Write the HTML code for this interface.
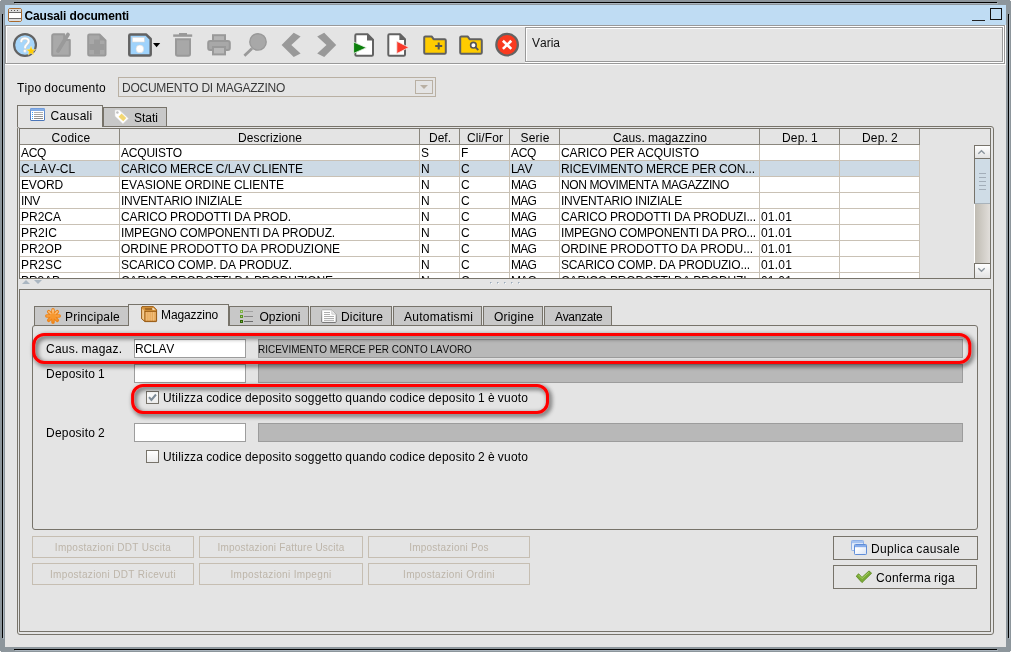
<!DOCTYPE html>
<html lang="it"><head><meta charset="utf-8"><title>Causali documenti</title>
<style>
html,body{margin:0;padding:0;}
body{font-kerning:none;width:1011px;height:652px;overflow:hidden;background:#e4e4e4;font-family:"Liberation Sans",sans-serif;font-size:12px;color:#000;}
#win{will-change:transform;position:relative;width:1011px;height:652px;overflow:hidden;background:#e4e4e4;}
.a{position:absolute;box-sizing:border-box;}
.t{position:absolute;white-space:nowrap;line-height:14px;font-size:12px;}
.s{position:absolute;white-space:nowrap;line-height:13px;font-size:11px;}
svg{position:absolute;overflow:visible;}
.tab{position:absolute;box-sizing:border-box;border:1px solid #77736a;background:#c8c8c8;}
.tabsel{position:absolute;box-sizing:border-box;border:1px solid #77736a;border-bottom:none;background:#e4e4e4;}
.dbtn{position:absolute;box-sizing:border-box;border:1px solid #c6beb2;color:#bdb5a9;font-size:10px;line-height:21px;text-align:center;white-space:nowrap;}
.btn{position:absolute;box-sizing:border-box;border:1px solid #77736a;}
.inp{position:absolute;box-sizing:border-box;border:1px solid #9d9d9d;background:#fff;}
.gfl{position:absolute;box-sizing:border-box;border:1px solid #9c9c9c;background:#b8b8b8;}
.row{position:absolute;left:20px;width:900px;height:15px;background:#fff;border-bottom:1px solid #c9c1b5;}
.cell{position:absolute;top:0;height:15px;line-height:17px;white-space:nowrap;overflow:hidden;border-right:1px solid #c9c1b5;box-sizing:border-box;padding-left:1px;}

</style></head>
<body>
<div id="win">
<div class="a " style="left:0px;top:0px;width:1011px;height:652px;background:#8d969c;"></div>
<div class="a " style="left:5px;top:5px;width:1001px;height:642px;background:#e4e4e4;"></div>
<div class="a " style="left:14px;top:2px;width:983px;height:1px;background:#000;"></div>
<div class="a " style="left:15px;top:3px;width:983px;height:1px;background:#aab4bd;"></div>
<div class="a " style="left:14px;top:649px;width:983px;height:1px;background:#000;"></div>
<div class="a " style="left:15px;top:650px;width:983px;height:1px;background:#aab4bd;"></div>
<div class="a " style="left:2px;top:14px;width:1px;height:624px;background:#000;"></div>
<div class="a " style="left:3px;top:15px;width:1px;height:624px;background:#aab4bd;"></div>
<div class="a " style="left:1008px;top:14px;width:1px;height:624px;background:#000;"></div>
<div class="a " style="left:1009px;top:15px;width:1px;height:624px;background:#aab4bd;"></div>
<div class="a " style="left:0px;top:0px;width:1px;height:1px;background:#f2f2f2;"></div>
<div class="a " style="left:1010px;top:0px;width:1px;height:1px;background:#f2f2f2;"></div>
<div class="a " style="left:0px;top:651px;width:1px;height:1px;background:#f2f2f2;"></div>
<div class="a " style="left:1010px;top:651px;width:1px;height:1px;background:#f2f2f2;"></div>
<div class="a " style="left:5px;top:5px;width:1001px;height:20px;background:#bfdcf3;"></div>
<svg style="left:8px;top:8px" width="14" height="14" viewBox="0 0 14 14">
<rect x="0.5" y="0.5" width="13" height="13" rx="1.6" fill="#fff" stroke="#a8682c"/>
<rect x="1" y="1" width="12" height="3" fill="#dcdcdc"/>
<rect x="3" y="2" width="1" height="1" fill="#555"/><rect x="6" y="2" width="1" height="1" fill="#555"/><rect x="9" y="2" width="1" height="1" fill="#555"/>
<rect x="1" y="4" width="12" height="1" fill="#6a6a6a"/>
<rect x="1" y="10" width="12" height="1" fill="#6a6a6a"/>
<rect x="1" y="11" width="12" height="2" fill="#dedede"/>
</svg>
<div class="t" style="left:24.5px;top:9px;font-weight:bold;letter-spacing:-0.13px;">Causali documenti</div>
<div class="a " style="left:972px;top:20px;width:13px;height:1px;background:#222;"></div>
<div class="a " style="left:990px;top:8px;width:12px;height:12px;border:1px solid #111;"></div>
<div class="a " style="left:6px;top:26px;width:1000px;height:39px;border:1px solid #fff;"></div>
<div class="a " style="left:1005px;top:25px;width:1px;height:1px;background:#fff;"></div>
<div class="a " style="left:5px;top:64px;width:1px;height:1px;background:#fff;"></div>
<div class="a " style="left:5px;top:25px;width:1000px;height:39px;border:1px solid #999999;"></div>
<div class="a " style="left:526px;top:28px;width:478px;height:35px;border:1px solid #fff;"></div>
<div class="a " style="left:1003px;top:27px;width:1px;height:1px;background:#fff;"></div>
<div class="a " style="left:525px;top:62px;width:1px;height:1px;background:#fff;"></div>
<div class="a " style="left:525px;top:27px;width:478px;height:35px;border:1px solid #999999;"></div>
<div class="t" style="left:532px;top:36px;letter-spacing:-0.003px;color:#111;">Varia</div>
<svg style="left:0;top:0" width="526" height="66" viewBox="0 0 526 66">
<!-- help -->
<circle cx="25" cy="45" r="10.9" fill="#a6d6fb" stroke="#626262" stroke-width="2.2"/>
<path d="M21.3 41.3 C21.3 37.4 28.7 37.3 28.7 41.3 C28.7 44 25.1 44.4 25.1 47.6" fill="none" stroke="#d0d0d0" stroke-width="2.9" stroke-linecap="round"/>
<path d="M21.3 41.3 C21.3 37.4 28.7 37.3 28.7 41.3 C28.7 44 25.1 44.4 25.1 47.6" fill="none" stroke="#fff" stroke-width="1.9" stroke-linecap="round"/>
<circle cx="24.9" cy="50.9" r="1.5" fill="#fff" stroke="#d0d0d0" stroke-width="0.5"/>
<path d="M31 46 L32.3 49.3 L35.6 49.5 L33 51.7 L33.9 55 L31 53.2 L28.1 55 L29 51.7 L26.4 49.5 L29.7 49.3 Z" fill="#ffcc00" stroke="#f6edb8" stroke-width="0.5"/>
<!-- edit (disabled) -->
<path d="M53.6 34.3 L64.2 34.3 L64.2 40 L69.8 40 L69.8 54.2 Q69.8 55.8 68.2 55.8 L53.8 55.8 Q52.2 55.8 52.2 54.2 L52.2 35.8 Q52.2 34.3 53.6 34.3 Z" fill="#a9a9a9" stroke="#999999" stroke-width="2" stroke-linejoin="round"/>
<path d="M68 34.6 L58 51" stroke="#9a9a9a" stroke-width="3.8" stroke-linecap="round"/>
<!-- new (disabled) -->
<path d="M89.5 34.5 L99.5 34.5 L105.5 40.5 L105.5 54.5 Q105.5 55.5 104.5 55.5 L89.5 55.5 Q88.2 55.5 88.2 54.2 L88.2 35.8 Q88.2 34.5 89.5 34.5 Z" fill="#a8a8a8" stroke="#999999" stroke-width="2" stroke-linejoin="round"/>
<path d="M99.5 34 L106 40.5 L99.5 40.5 Z" fill="#999999"/>
<path d="M94 39.5 L100 39.5 L100 44 L104.5 44 L104.5 50 L100 50 L100 54.5 L94 54.5 L94 50 L89.4 50 L89.4 44 L94 44 Z" fill="#9b9b9b"/>
<!-- save -->
<path d="M130.5 34.4 L146 34.4 L150.7 39 L150.7 54.5 Q150.7 55.6 149.6 55.6 L130.5 55.6 Q129.3 55.6 129.3 54.4 L129.3 35.6 Q129.3 34.4 130.5 34.4 Z" fill="#9fd3fc" stroke="#626262" stroke-width="2.5" stroke-linejoin="round"/>
<rect x="132.4" y="37.4" width="12" height="4.6" fill="#fff" stroke="#d6d6d6" stroke-width="0.6"/>
<circle cx="139.9" cy="48.9" r="3.9" fill="#fff" stroke="#d6d6d6" stroke-width="0.6"/>
<path d="M153 43 L160.2 43 L156.6 47.2 Z" fill="#000"/>
<!-- trash (disabled) -->
<rect x="179" y="33" width="8" height="2" fill="#999999"/>
<rect x="173.2" y="34.4" width="19" height="2.4" fill="#999999"/>
<path d="M176 39.2 L190 39.2 L190 54 Q190 55.8 188.2 55.8 L177.8 55.8 Q176 55.8 176 54 Z" fill="#a8a8a8" stroke="#999999" stroke-width="2"/>
<!-- print (disabled) -->
<rect x="213" y="35.2" width="12" height="6" fill="#b4b4b4" stroke="#999999" stroke-width="2"/>
<rect x="208.2" y="41" width="21.6" height="9" rx="2" fill="#a8a8a8" stroke="#999999" stroke-width="2"/>
<rect x="213" y="47" width="12" height="7.4" fill="#b8b8b8" stroke="#999999" stroke-width="2"/>
<!-- search (disabled) -->
<path d="M252 48.6 L244.4 55.8" stroke="#999999" stroke-width="2.8"/>
<circle cx="258" cy="41.9" r="8.2" fill="#a8a8a8" stroke="#999999" stroke-width="1.4"/>
<!-- chevrons (disabled) -->
<path d="M281.6 45 L293.7 32.8 L300.6 36.6 L291.3 45 L300.6 53.4 L293.7 57.1 Z" fill="#999999"/>
<path d="M336.2 45 L324.2 32.8 L317.2 36.6 L326.5 45 L317.2 53.4 L324.2 57.1 Z" fill="#999999"/>
<!-- doc green -->
<path d="M356.5 34.3 L367.5 34.3 L373 39.8 L373 54.6 Q373 55.8 371.8 55.8 L356.5 55.8 Q355.3 55.8 355.3 54.6 L355.3 35.5 Q355.3 34.3 356.5 34.3 Z" fill="#fff" stroke="#626262" stroke-width="2" stroke-linejoin="round"/>
<path d="M367 33.6 L373.8 40.4 L367 40.4 Z" fill="#626262"/>
<path d="M353.6 42 L366.4 47.7 L353.6 53.4 Z" fill="#0b7f0b" stroke="#e8f0e8" stroke-width="0.8" stroke-linejoin="round"/>
<!-- doc red -->
<path d="M389.5 34.3 L400 34.3 L405 39.3 L405 54.6 Q405 55.8 403.8 55.8 L389.5 55.8 Q388.3 55.8 388.3 54.6 L388.3 35.5 Q388.3 34.3 389.5 34.3 Z" fill="#fff" stroke="#626262" stroke-width="2" stroke-linejoin="round"/>
<path d="M399.4 33.6 L405.8 40 L399.4 40 Z" fill="#626262"/>
<path d="M396.8 41.2 L408.8 47.4 L396.8 53.6 Z" fill="#f9392b" stroke="#f4e6e4" stroke-width="0.8" stroke-linejoin="round"/>
<!-- folder plus -->
<path d="M425.4 36.4 L431.6 36.4 L433.6 39.2 L444.6 39.2 Q445.8 39.2 445.8 40.4 L445.8 52.6 Q445.8 53.8 444.6 53.8 L425.4 53.8 Q424.2 53.8 424.2 52.6 L424.2 37.6 Q424.2 36.4 425.4 36.4 Z" fill="#ffcc00" stroke="#606060" stroke-width="2" stroke-linejoin="round"/>
<path d="M435.2 46 L442.2 46 M438.7 42.5 L438.7 49.5" stroke="#555" stroke-width="2"/>
<!-- folder search -->
<path d="M461.4 36.4 L467.6 36.4 L469.6 39.2 L480.6 39.2 Q481.8 39.2 481.8 40.4 L481.8 52.6 Q481.8 53.8 480.6 53.8 L461.4 53.8 Q460.2 53.8 460.2 52.6 L460.2 37.6 Q460.2 36.4 461.4 36.4 Z" fill="#ffcc00" stroke="#606060" stroke-width="2" stroke-linejoin="round"/>
<path d="M475.4 47.2 L478.3 50" stroke="#555" stroke-width="1.8"/>
<circle cx="473.4" cy="45.2" r="2.8" fill="#fff" stroke="#555" stroke-width="1.6"/>
<!-- red X -->
<circle cx="507.1" cy="44.7" r="10.8" fill="#f93a1f" stroke="#636363" stroke-width="2.2"/>
<path d="M502.9 40.7 L511.3 48.9 M511.3 40.7 L502.9 48.9" stroke="#fff" stroke-width="2.6"/>
</svg>
<div class="t" style="left:17px;top:81px;letter-spacing:0.253px;word-spacing:-0.587px;">Tipo documento</div>
<div class="a " style="left:118px;top:77px;width:318px;height:20px;border:1px solid #b9b0a3;"></div>
<div class="t" style="left:122px;top:81px;letter-spacing:-0.250px;word-spacing:-0.084px;color:#3a3a3a;">DOCUMENTO DI MAGAZZINO</div>
<div class="a " style="left:415px;top:80px;width:18px;height:14px;border:1px solid #b9b0a3;"></div>
<svg style="left:420px;top:85px" width="8" height="4" viewBox="0 0 8 4"><path d="M0 0 L8 0 L4 4 Z" fill="#b9b0a3"/></svg>
<div class="a " style="left:17px;top:126px;width:977px;height:509px;border:1px solid #77736a;border-radius:3px;"></div>
<div class="tab" style="left:103px;top:107px;width:64px;height:20px;"></div>
<div class="tabsel" style="left:17px;top:105px;width:86px;height:22px;"></div>
<div class="t" style="left:50.5px;top:109px;letter-spacing:0.283px;">Causali</div>
<div class="t" style="left:134px;top:111px;letter-spacing:-0.002px;">Stati</div>
<div class="a " style="left:19px;top:128px;width:972px;height:151px;border:1px solid #77736a;"></div>
<div class="a " style="left:20px;top:144px;width:900px;height:1px;background:#8a867d;"></div>
<div class="a " style="left:119px;top:129px;width:1px;height:15px;background:#8a867d;"></div>
<div class="t" style="left:21px;width:100px;text-align:center;top:131px;letter-spacing:0.274px;">Codice</div>
<div class="a " style="left:419px;top:129px;width:1px;height:15px;background:#8a867d;"></div>
<div class="t" style="left:120px;width:300px;text-align:center;top:131px;letter-spacing:0.119px;">Descrizione</div>
<div class="a " style="left:459px;top:129px;width:1px;height:15px;background:#8a867d;"></div>
<div class="t" style="left:420px;width:40px;text-align:center;top:131px;letter-spacing:-0.002px;">Def.</div>
<div class="a " style="left:509px;top:129px;width:1px;height:15px;background:#8a867d;"></div>
<div class="t" style="left:460px;width:50px;text-align:center;top:131px;letter-spacing:0.095px;">Cli/For</div>
<div class="a " style="left:559px;top:129px;width:1px;height:15px;background:#8a867d;"></div>
<div class="t" style="left:510px;width:50px;text-align:center;top:131px;letter-spacing:0.197px;">Serie</div>
<div class="a " style="left:759px;top:129px;width:1px;height:15px;background:#8a867d;"></div>
<div class="t" style="left:560px;width:200px;text-align:center;top:131px;letter-spacing:0.116px;word-spacing:-0.450px;">Caus. magazzino</div>
<div class="a " style="left:839px;top:129px;width:1px;height:15px;background:#8a867d;"></div>
<div class="t" style="left:760px;width:80px;text-align:center;top:131px;letter-spacing:0.196px;word-spacing:-0.530px;">Dep. 1</div>
<div class="a " style="left:919px;top:129px;width:1px;height:15px;background:#8a867d;"></div>
<div class="t" style="left:840px;width:80px;text-align:center;top:131px;letter-spacing:0.196px;word-spacing:-0.530px;">Dep. 2</div>
<div class="a" style="left:20px;top:145px;width:954px;height:133px;overflow:hidden;">
<div class="row" style="left:0;top:0px;background:#fff;">
<div class="cell" style="left:0px;width:100px;letter-spacing:-0.335px;">ACQ</div>
<div class="cell" style="left:100px;width:300px;letter-spacing:-0.209px;">ACQUISTO</div>
<div class="cell" style="left:400px;width:40px;letter-spacing:-0.004px;">S</div>
<div class="cell" style="left:440px;width:50px;letter-spacing:-0.330px;">F</div>
<div class="cell" style="left:490px;width:50px;letter-spacing:-0.335px;">ACQ</div>
<div class="cell" style="left:540px;width:200px;letter-spacing:-0.119px;word-spacing:-0.215px;">CARICO PER ACQUISTO</div>
<div class="cell" style="left:740px;width:80px;"></div>
<div class="cell" style="left:820px;width:80px;"></div>
</div>
<div class="row" style="left:0;top:16px;background:#cddae5;">
<div class="cell" style="left:0px;width:100px;letter-spacing:-0.085px;">C-LAV-CL</div>
<div class="cell" style="left:100px;width:300px;letter-spacing:-0.103px;word-spacing:-0.231px;">CARICO MERCE C/LAV CLIENTE</div>
<div class="cell" style="left:400px;width:40px;letter-spacing:0.334px;">N</div>
<div class="cell" style="left:440px;width:50px;letter-spacing:0.334px;">C</div>
<div class="cell" style="left:490px;width:50px;letter-spacing:-0.561px;">LAV</div>
<div class="cell" style="left:540px;width:200px;letter-spacing:-0.121px;word-spacing:-0.213px;">RICEVIMENTO MERCE PER CON...</div>
<div class="cell" style="left:740px;width:80px;"></div>
<div class="cell" style="left:820px;width:80px;"></div>
</div>
<div class="row" style="left:0;top:32px;background:#fff;">
<div class="cell" style="left:0px;width:100px;letter-spacing:-0.135px;">EVORD</div>
<div class="cell" style="left:100px;width:300px;letter-spacing:-0.081px;word-spacing:-0.253px;">EVASIONE ORDINE CLIENTE</div>
<div class="cell" style="left:400px;width:40px;letter-spacing:0.334px;">N</div>
<div class="cell" style="left:440px;width:50px;letter-spacing:0.334px;">C</div>
<div class="cell" style="left:490px;width:50px;letter-spacing:-0.778px;">MAG</div>
<div class="cell" style="left:540px;width:200px;letter-spacing:-0.413px;word-spacing:0.079px;">NON MOVIMENTA MAGAZZINO</div>
<div class="cell" style="left:740px;width:80px;"></div>
<div class="cell" style="left:820px;width:80px;"></div>
</div>
<div class="row" style="left:0;top:48px;background:#fff;">
<div class="cell" style="left:0px;width:100px;letter-spacing:-0.335px;">INV</div>
<div class="cell" style="left:100px;width:300px;letter-spacing:-0.223px;word-spacing:-0.111px;">INVENTARIO INIZIALE</div>
<div class="cell" style="left:400px;width:40px;letter-spacing:0.334px;">N</div>
<div class="cell" style="left:440px;width:50px;letter-spacing:0.334px;">C</div>
<div class="cell" style="left:490px;width:50px;letter-spacing:-0.778px;">MAG</div>
<div class="cell" style="left:540px;width:200px;letter-spacing:-0.223px;word-spacing:-0.111px;">INVENTARIO INIZIALE</div>
<div class="cell" style="left:740px;width:80px;"></div>
<div class="cell" style="left:820px;width:80px;"></div>
</div>
<div class="row" style="left:0;top:64px;background:#fff;">
<div class="cell" style="left:0px;width:100px;letter-spacing:-0.003px;">PR2CA</div>
<div class="cell" style="left:100px;width:300px;letter-spacing:-0.112px;word-spacing:-0.222px;">CARICO PRODOTTI DA PROD.</div>
<div class="cell" style="left:400px;width:40px;letter-spacing:0.334px;">N</div>
<div class="cell" style="left:440px;width:50px;letter-spacing:0.334px;">C</div>
<div class="cell" style="left:490px;width:50px;letter-spacing:-0.778px;">MAG</div>
<div class="cell" style="left:540px;width:200px;letter-spacing:-0.128px;word-spacing:-0.206px;">CARICO PRODOTTI DA PRODUZI...</div>
<div class="cell" style="left:740px;width:80px;letter-spacing:0.194px;">01.01</div>
<div class="cell" style="left:820px;width:80px;"></div>
</div>
<div class="row" style="left:0;top:80px;background:#fff;">
<div class="cell" style="left:0px;width:100px;letter-spacing:0.131px;">PR2IC</div>
<div class="cell" style="left:100px;width:300px;letter-spacing:-0.141px;word-spacing:-0.193px;">IMPEGNO COMPONENTI DA PRODUZ.</div>
<div class="cell" style="left:400px;width:40px;letter-spacing:0.334px;">N</div>
<div class="cell" style="left:440px;width:50px;letter-spacing:0.334px;">C</div>
<div class="cell" style="left:490px;width:50px;letter-spacing:-0.778px;">MAG</div>
<div class="cell" style="left:540px;width:200px;letter-spacing:-0.187px;word-spacing:-0.147px;">IMPEGNO COMPONENTI DA PRO...</div>
<div class="cell" style="left:740px;width:80px;letter-spacing:0.194px;">01.01</div>
<div class="cell" style="left:820px;width:80px;"></div>
</div>
<div class="row" style="left:0;top:96px;background:#fff;">
<div class="cell" style="left:0px;width:100px;letter-spacing:0.064px;">PR2OP</div>
<div class="cell" style="left:100px;width:300px;letter-spacing:-0.052px;word-spacing:-0.282px;">ORDINE PRODOTTO DA PRODUZIONE</div>
<div class="cell" style="left:400px;width:40px;letter-spacing:0.334px;">N</div>
<div class="cell" style="left:440px;width:50px;letter-spacing:0.334px;">C</div>
<div class="cell" style="left:490px;width:50px;letter-spacing:-0.778px;">MAG</div>
<div class="cell" style="left:540px;width:200px;letter-spacing:-0.070px;word-spacing:-0.264px;">ORDINE PRODOTTO DA PRODU...</div>
<div class="cell" style="left:740px;width:80px;letter-spacing:0.194px;">01.01</div>
<div class="cell" style="left:820px;width:80px;"></div>
</div>
<div class="row" style="left:0;top:112px;background:#fff;">
<div class="cell" style="left:0px;width:100px;letter-spacing:0.197px;">PR2SC</div>
<div class="cell" style="left:100px;width:300px;letter-spacing:-0.128px;word-spacing:-0.206px;">SCARICO COMP. DA PRODUZ.</div>
<div class="cell" style="left:400px;width:40px;letter-spacing:0.334px;">N</div>
<div class="cell" style="left:440px;width:50px;letter-spacing:0.334px;">C</div>
<div class="cell" style="left:490px;width:50px;letter-spacing:-0.778px;">MAG</div>
<div class="cell" style="left:540px;width:200px;letter-spacing:-0.161px;word-spacing:-0.173px;">SCARICO COMP. DA PRODUZIO...</div>
<div class="cell" style="left:740px;width:80px;letter-spacing:0.194px;">01.01</div>
<div class="cell" style="left:820px;width:80px;"></div>
</div>
<div class="row" style="left:0;top:128px;background:#fff;">
<div class="cell" style="left:0px;width:100px;letter-spacing:-0.070px;">PR3AP</div>
<div class="cell" style="left:100px;width:300px;letter-spacing:-0.090px;word-spacing:-0.244px;">CARICO PRODOTTI DA PRODUZIONE</div>
<div class="cell" style="left:400px;width:40px;letter-spacing:0.334px;">N</div>
<div class="cell" style="left:440px;width:50px;letter-spacing:0.334px;">C</div>
<div class="cell" style="left:490px;width:50px;letter-spacing:-0.778px;">MAG</div>
<div class="cell" style="left:540px;width:200px;letter-spacing:-0.128px;word-spacing:-0.206px;">CARICO PRODOTTI DA PRODUZI...</div>
<div class="cell" style="left:740px;width:80px;letter-spacing:0.194px;">01.01</div>
<div class="cell" style="left:820px;width:80px;"></div>
</div>
</div>
<div class="a " style="left:974px;top:145px;width:16px;height:133px;background:linear-gradient(90deg,#ffffff 0,#ffffff 1px,#bfbbb2 1px,#e1deda 100%);"></div>
<div class="a " style="left:974px;top:145px;width:16px;height:14px;border:1px solid #77736a;border-right:none;background:linear-gradient(#ffffff,#e2e2e2);"></div>
<div class="a " style="left:974px;top:263px;width:16px;height:15px;border:1px solid #77736a;border-right:none;border-bottom:none;background:linear-gradient(#ffffff,#e2e2e2);"></div>
<div class="a " style="left:974px;top:158px;width:16px;height:46px;border:1px solid #77736a;border-right:none;border-bottom:1px solid #a9b3bb;background:#cfdce6;"></div>
<div class="a " style="left:979px;top:173px;width:7px;height:1px;background:#a3aeb9;"></div>
<div class="a " style="left:979px;top:177px;width:7px;height:1px;background:#a3aeb9;"></div>
<div class="a " style="left:979px;top:181px;width:7px;height:1px;background:#a3aeb9;"></div>
<div class="a " style="left:979px;top:185px;width:7px;height:1px;background:#a3aeb9;"></div>
<div class="a " style="left:979px;top:189px;width:7px;height:1px;background:#a3aeb9;"></div>
<svg style="left:978px;top:150px" width="7" height="4" viewBox="0 0 7 4"><path d="M0.3 3.8 L3.5 0.7 L6.7 3.8" fill="none" stroke="#8a949c" stroke-width="1.3"/></svg>
<svg style="left:978px;top:268px" width="7" height="4" viewBox="0 0 7 4"><path d="M0.3 0.2 L3.5 3.3 L6.7 0.2" fill="none" stroke="#8a949c" stroke-width="1.3"/></svg>
<svg style="left:22px;top:280px" width="20" height="4" viewBox="0 0 20 4"><path d="M0 4 L4 0 L8 4 Z M12 0 L20 0 L16 4 Z" fill="#aab6c1"/></svg>
<div class="a " style="left:490px;top:282px;width:1px;height:1px;background:#9aa8b6;"></div>
<div class="a " style="left:491px;top:282px;width:1px;height:1px;background:#c3ccd5;"></div>
<div class="a " style="left:490px;top:283px;width:1px;height:1px;background:#c3ccd5;"></div>
<div class="a " style="left:491px;top:283px;width:1px;height:1px;background:#fafafa;"></div>
<div class="a " style="left:497px;top:282px;width:1px;height:1px;background:#9aa8b6;"></div>
<div class="a " style="left:498px;top:282px;width:1px;height:1px;background:#c3ccd5;"></div>
<div class="a " style="left:497px;top:283px;width:1px;height:1px;background:#c3ccd5;"></div>
<div class="a " style="left:498px;top:283px;width:1px;height:1px;background:#fafafa;"></div>
<div class="a " style="left:504px;top:282px;width:1px;height:1px;background:#9aa8b6;"></div>
<div class="a " style="left:505px;top:282px;width:1px;height:1px;background:#c3ccd5;"></div>
<div class="a " style="left:504px;top:283px;width:1px;height:1px;background:#c3ccd5;"></div>
<div class="a " style="left:505px;top:283px;width:1px;height:1px;background:#fafafa;"></div>
<div class="a " style="left:511px;top:282px;width:1px;height:1px;background:#9aa8b6;"></div>
<div class="a " style="left:512px;top:282px;width:1px;height:1px;background:#c3ccd5;"></div>
<div class="a " style="left:511px;top:283px;width:1px;height:1px;background:#c3ccd5;"></div>
<div class="a " style="left:512px;top:283px;width:1px;height:1px;background:#fafafa;"></div>
<div class="a " style="left:518px;top:282px;width:1px;height:1px;background:#9aa8b6;"></div>
<div class="a " style="left:519px;top:282px;width:1px;height:1px;background:#c3ccd5;"></div>
<div class="a " style="left:518px;top:283px;width:1px;height:1px;background:#c3ccd5;"></div>
<div class="a " style="left:519px;top:283px;width:1px;height:1px;background:#fafafa;"></div>
<div class="a " style="left:19px;top:289px;width:972px;height:343px;border:1px solid #77736a;"></div>
<div class="a " style="left:32px;top:325px;width:946px;height:205px;border:1px solid #77736a;border-radius:3px;"></div>
<div class="tab" style="left:34px;top:306px;width:95px;height:20px;"></div>
<div class="t" style="left:65px;top:310px;letter-spacing:0.231px;">Principale</div>
<div class="tab" style="left:229px;top:306px;width:80px;height:20px;"></div>
<div class="t" style="left:259.4px;top:310px;letter-spacing:0.045px;">Opzioni</div>
<div class="tab" style="left:310px;top:306px;width:82px;height:20px;"></div>
<div class="t" style="left:341px;top:310px;letter-spacing:0.166px;">Diciture</div>
<div class="tab" style="left:393px;top:306px;width:89px;height:20px;"></div>
<div class="t" style="left:404px;top:310px;letter-spacing:0.280px;">Automatismi</div>
<div class="tab" style="left:483px;top:306px;width:60px;height:20px;"></div>
<div class="t" style="left:494px;top:310px;letter-spacing:0.188px;">Origine</div>
<div class="tab" style="left:544px;top:306px;width:68px;height:20px;"></div>
<div class="t" style="left:555px;top:310px;letter-spacing:-0.329px;">Avanzate</div>
<div class="tabsel" style="left:128px;top:304px;width:101px;height:22px;"></div>
<div class="t" style="left:161px;top:308px;letter-spacing:-0.115px;">Magazzino</div>
<svg style="left:30px;top:108px" width="15" height="13" viewBox="0 0 15 13">
<defs><linearGradient id="cg" x1="0" y1="0" x2="0" y2="1"><stop offset="0" stop-color="#6f9bdc"/><stop offset="1" stop-color="#4a74b6"/></linearGradient></defs>
<rect x="0" y="0" width="15" height="13" rx="1.4" fill="url(#cg)"/>
<rect x="0.8" y="0.8" width="13.4" height="2" fill="#86aee6"/>
<rect x="1" y="3" width="13" height="9" fill="#fff"/>
<g fill="#39a0ff"><rect x="2" y="4" width="1" height="1"/><rect x="2" y="6" width="1" height="1"/><rect x="2" y="8" width="1" height="1"/><rect x="2" y="10" width="1" height="1"/></g>
<g><rect x="4" y="4" width="9" height="1" fill="#b0b0b0"/><rect x="4" y="6" width="9" height="1" fill="#a4a4a4"/><rect x="4" y="8" width="9" height="1" fill="#979797"/><rect x="4" y="10" width="9" height="1" fill="#8c8c8c"/></g>
</svg>
<svg style="left:114px;top:109px" width="16" height="16" viewBox="0 0 16 16">
<path d="M1 1.6 Q1 1.1 1.5 1.1 L5.4 1.1 L14.4 9.5 L8.9 14.7 L1 7.2 Z" fill="#fff" stroke="#dcdcdc" stroke-width="0.6" stroke-linejoin="round"/>
<rect x="-3.2" y="-2.2" width="6.4" height="4.4" transform="translate(8.4 8.4) rotate(43)" fill="#f3d772"/>
<circle cx="3.4" cy="3.5" r="1.25" fill="#c0c0c0"/>
</svg>
<svg style="left:45px;top:308px" width="16" height="16" viewBox="0 0 16 16">
<defs><linearGradient id="pg" x1="0" y1="1" x2="0" y2="15" gradientUnits="userSpaceOnUse"><stop offset="0" stop-color="#ffe2bd"/><stop offset="0.45" stop-color="#fba84c"/><stop offset="1" stop-color="#ef8518"/></linearGradient></defs>
<g stroke="#ee8417" stroke-width="3.5" stroke-linecap="round"><path d="M8 1.8 L8 14.2 M1.8 8 L14.2 8 M3.7 3.7 L12.3 12.3 M12.3 3.7 L3.7 12.3"/></g>
<g stroke="url(#pg)" stroke-width="1.5" stroke-linecap="round"><path d="M8 1.9 L8 14 M1.9 8 L14 8 M3.8 3.8 L12.2 12.2 M12.2 3.8 L3.8 12.2"/></g>
<circle cx="8" cy="8" r="2.6" fill="#f7982f"/>
</svg>
<svg style="left:141px;top:306px" width="16" height="16" viewBox="0 0 16 16">
<path d="M1 0.6 L12.4 0.6 L15.6 3.8 L15.6 14.8 Q15.6 15.6 14.8 15.6 L4 15.6 L0.6 12.8 L0.6 1 Z" fill="#d9963e" stroke="#93550f" stroke-width="0.9" stroke-linejoin="round"/>
<path d="M1.2 2.4 L3.5 5 L3.5 14.6 L1.2 12.6 Z" fill="#f3cc94"/>
<path d="M3.6 1.9 L11 1.9 L11.4 4 L4.4 4 Z" fill="#a66a24"/>
<path d="M11.2 2 L12.6 2 L14.2 4 L11.6 4 Z" fill="#f4dcba"/>
<rect x="3.9" y="5.3" width="11.3" height="9.9" fill="#e6a553" stroke="#93550f" stroke-width="0.9"/>
<g stroke="#f2c487" stroke-width="0.8"><path d="M5.3 6 V14.6 M7.1 6 V14.6 M8.9 6 V14.6 M10.7 6 V14.6 M12.5 6 V14.6 M14.1 6 V14.6"/></g>
</svg>
<svg style="left:240px;top:310px" width="14" height="14" viewBox="0 0 14 14">
<rect x="0" y="0" width="3" height="3" fill="#7fb14b"/><rect x="1" y="1" width="1" height="1" fill="#c9e2ae"/>
<rect x="0" y="5" width="3" height="3" fill="#5a9422"/><rect x="1" y="6" width="1" height="1" fill="#a9cf84"/>
<rect x="0" y="10" width="3" height="3" fill="#2f6404"/><rect x="1" y="11" width="1" height="1" fill="#7fb14b"/>
<rect x="4" y="1" width="9" height="1" fill="#a2a2a2"/><rect x="4" y="6" width="9" height="1" fill="#868686"/><rect x="4" y="11" width="9" height="1" fill="#6c6c6c"/>
</svg>
<svg style="left:321px;top:309px" width="16" height="14" viewBox="0 0 16 14">
<defs><linearGradient id="dg" x1="0" y1="0" x2="0" y2="1"><stop offset="0" stop-color="#a4a4a4"/><stop offset="1" stop-color="#5e5e5e"/></linearGradient></defs>
<path d="M1.4 0.8 L10.8 0.8 L15.2 5.2 L15.2 12.6 Q15.2 13.4 14.4 13.4 L1.4 13.4 Q0.7 13.4 0.7 12.6 L0.7 1.6 Q0.7 0.8 1.4 0.8 Z" fill="#fff" stroke="url(#dg)" stroke-width="0.9" stroke-linejoin="round"/>
<path d="M10.8 1 L10.8 5.2 L15 5.2" fill="#ececec" stroke="#b4b4b4" stroke-width="0.6"/>
<g stroke="#9a9a9a" stroke-width="0.8"><path d="M3 3.5 H9 M3 5.5 H9 M3 7.5 H13 M3 9.5 H13 M3 11.4 H13"/></g>
</svg>
<div class="t" style="left:46px;top:342px;letter-spacing:0.238px;word-spacing:-0.572px;">Caus. magaz.</div>
<div class="inp" style="left:134px;top:339px;width:112px;height:19px;"></div>
<div class="t" style="left:135px;top:342px;letter-spacing:-0.203px;">RCLAV</div>
<div class="gfl" style="left:258px;top:339px;width:705px;height:19px;"></div>
<div class="s" style="left:257.8px;top:343px;color:#0c0c0c;transform:scaleX(0.904);transform-origin:0 0;">RICEVIMENTO MERCE PER CONTO LAVORO</div>
<div class="t" style="left:46px;top:367px;letter-spacing:0.218px;word-spacing:-0.552px;">Deposito 1</div>
<div class="inp" style="left:134px;top:364px;width:112px;height:19px;"></div>
<div class="gfl" style="left:258px;top:364px;width:705px;height:19px;"></div>
<div class="t" style="left:46px;top:426px;letter-spacing:0.218px;word-spacing:-0.552px;">Deposito 2</div>
<div class="inp" style="left:134px;top:423px;width:112px;height:19px;"></div>
<div class="gfl" style="left:258px;top:423px;width:705px;height:19px;"></div>
<div class="a " style="left:146px;top:391px;width:13px;height:13px;border:1px solid #77736a;background:linear-gradient(#ffffff,#ececec);"></div>
<svg style="left:148px;top:393px" width="9" height="9" viewBox="0 0 9 9"><path d="M1 4.2 L3.4 7 L8 1.5" fill="none" stroke="#7d8b97" stroke-width="2"/></svg>
<div class="a " style="left:146px;top:450px;width:13px;height:13px;border:1px solid #77736a;background:linear-gradient(#ffffff,#ececec);"></div>
<div class="t" style="left:163px;top:391px;letter-spacing:0.185px;word-spacing:-0.519px;">Utilizza codice deposito soggetto quando codice deposito 1 è vuoto</div>
<div class="t" style="left:163px;top:450px;letter-spacing:0.185px;word-spacing:-0.519px;">Utilizza codice deposito soggetto quando codice deposito 2 è vuoto</div>
<svg style="left:0;top:0" width="1011" height="652" viewBox="0 0 1011 652">
<defs><filter id="sh" x="-5%" y="-40%" width="110%" height="190%"><feGaussianBlur in="SourceAlpha" stdDeviation="2.6"/><feOffset dx="1.8" dy="2.2" result="b"/><feComponentTransfer><feFuncA type="linear" slope="0.78"/></feComponentTransfer><feMerge><feMergeNode/><feMergeNode in="SourceGraphic"/></feMerge></filter></defs>
<g fill="none" stroke="#ff0505" stroke-width="3" filter="url(#sh)">
<rect x="33.7" y="334.4" width="936.1" height="28" rx="10.5" ry="10.5"/>
<rect x="132.6" y="385.5" width="414.9" height="27" rx="10.5" ry="10.5"/>
</g></svg>
<div class="dbtn" style="left:32px;top:536px;width:162px;height:22px;letter-spacing:0.273px;">Impostazioni DDT Uscita</div>
<div class="dbtn" style="left:199px;top:536px;width:164px;height:22px;letter-spacing:0.22px;">Impostazioni Fatture Uscita</div>
<div class="dbtn" style="left:368px;top:536px;width:162px;height:22px;letter-spacing:0.222px;">Impostazioni Pos</div>
<div class="dbtn" style="left:32px;top:563px;width:162px;height:22px;letter-spacing:0.328px;">Impostazioni DDT Ricevuti</div>
<div class="dbtn" style="left:199px;top:563px;width:164px;height:22px;letter-spacing:0.335px;">Impostazioni Impegni</div>
<div class="dbtn" style="left:368px;top:563px;width:162px;height:22px;letter-spacing:0.327px;">Impostazioni Ordini</div>
<div class="btn" style="left:833px;top:536px;width:145px;height:24px;"></div>
<div class="btn" style="left:833px;top:565px;width:144px;height:24px;"></div>
<div class="t" style="left:871px;top:542px;letter-spacing:0.329px;word-spacing:-0.662px;">Duplica causale</div>
<div class="t" style="left:876px;top:571px;letter-spacing:0.275px;word-spacing:-0.609px;">Conferma riga</div>
<svg style="left:851px;top:540px" width="16" height="15" viewBox="0 0 16 15">
<defs><linearGradient id="dw" x1="0" y1="0" x2="1" y2="1"><stop offset="0.3" stop-color="#ffffff"/><stop offset="1" stop-color="#d6e1f3"/></linearGradient></defs>
<rect x="0.5" y="0.5" width="12" height="10" rx="0.8" fill="#e6eefa" stroke="#8fb0e6"/>
<rect x="1" y="1" width="11" height="2.2" fill="#a6c3f0"/>
<rect x="3.5" y="4.5" width="12" height="10" rx="0.8" fill="url(#dw)" stroke="#5f8dd8"/>
<rect x="4" y="5" width="11" height="2.2" fill="#86acea"/>
</svg>
<svg style="left:855px;top:570px" width="18" height="14" viewBox="0 0 18 14">
<path d="M1.2 6.2 L3.6 3.8 L7 7.4 L14 0.9 L16.6 3.2 L7 12.6 Z" fill="#7aab35" stroke="#5d8a22" stroke-width="0.9" stroke-linejoin="round"/>
<path d="M3.6 5 L7 8.6 L14 2.2" fill="none" stroke="#a4cf62" stroke-width="1"/>
</svg>
</div>
</body></html>
